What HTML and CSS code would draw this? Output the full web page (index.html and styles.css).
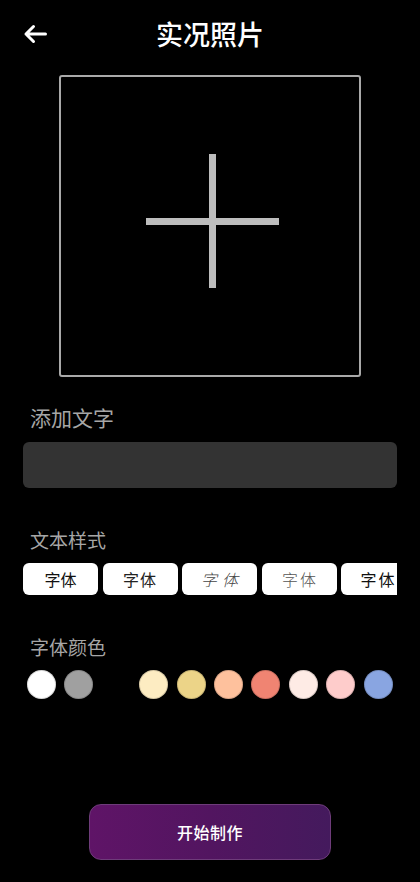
FILE: index.html
```html
<!DOCTYPE html>
<html lang="zh">
<head>
<meta charset="utf-8">
<link rel="stylesheet" href="styles.css">
</head>
<body>
<div class="page">
  <header class="topbar">
    <div class="back">
      <svg width="24" height="20" viewBox="0 0 24 20"><path d="M22.5 10H3M10.5 2.5L3 10l7.5 7.5" fill="none" stroke="#fff" stroke-width="3" stroke-linecap="round" stroke-linejoin="round"/></svg>
    </div>
    <h1 class="title">实况照片</h1>
    <div></div>
  </header>

  <div class="picker">
    <div class="plus"><span class="plus-h"></span><span class="plus-v"></span></div>
  </div>

  <div class="label label-lg">添加文字</div>
  <div class="input"></div>

  <div class="label label-sm">文本样式</div>
  <div class="chips">
    <div class="chip f1">字体</div>
    <div class="chip f2">字体</div>
    <div class="chip f3">字体</div>
    <div class="chip f4">字体</div>
    <div class="chip f5">字体</div>
  </div>

  <div class="label label-sm label-color">字体颜色</div>
  <div class="colors">
    <span class="dot c-white"></span>
    <span class="dot c-gray"></span>
    <span class="dot c-black"></span>
    <span class="dot c-cream"></span>
    <span class="dot c-gold"></span>
    <span class="dot c-peach"></span>
    <span class="dot c-coral"></span>
    <span class="dot c-blush"></span>
    <span class="dot c-pink"></span>
    <span class="dot c-blue"></span>
  </div>

  <button class="start">开始制作</button>
</div>
</body>
</html>
```

FILE: styles.css
```css
* { box-sizing: border-box; }
html, body { margin: 0; padding: 0; background: #000; }
body { font-family: "Noto Sans CJK SC", "Noto Sans", sans-serif; color: #fff; }

.page {
  width: 420px;
  height: 882px;
  display: flex;
  flex-direction: column;
  overflow: hidden;
}

.topbar {
  height: 68px;
  display: grid;
  grid-template-columns: 1fr auto 1fr;
  align-items: center;
}
.back { padding-left: 23px; display: flex; align-items: center; }
.title {
  margin: 0;
  font-size: 27px;
  font-weight: 500;
  line-height: 68px;
}

.picker {
  margin: 7px auto 0;
  width: 302px;
  height: 302px;
  border: 2px solid #a9a9a9;
  border-radius: 3px;
  display: flex;
  align-items: center;
  justify-content: center;
}
.plus { position: relative; width: 133px; height: 134px; margin: 0 0 10px 4px; }
.plus-h { position: absolute; left: 0; right: 0; top: 64px; height: 7px; background: #bdbdbd; }
.plus-v { position: absolute; top: 0; bottom: 0; left: 63px; width: 7px; background: #bdbdbd; }

.label { padding-left: 30px; color: #a6a6a6; }
.label-lg { font-size: 21px; line-height: 28px; margin-top: 26px; }
.label-sm { font-size: 19px; line-height: 26px; margin-top: 39px; }
.label-color { margin-top: 39px; }

.input {
  margin: 11px 23px 0;
  height: 46px;
  background: #333333;
  border-radius: 6px;
}

.chips {
  margin: 10px 23px 0;
  display: flex;
  gap: 4.5px;
  overflow: hidden;
}
.chip {
  flex: 0 0 75px;
  height: 32px;
  background: #fff;
  border-radius: 6px;
  color: #111;
  font-size: 16px;
  line-height: 32px;
  text-align: center;
}
.f2 { font-weight: 400; letter-spacing: 1px; color: #222; }
.f3 { font-weight: 300; color: #444; letter-spacing: 5px; text-indent: 5px; font-style: italic; }
.f4 { font-weight: 300; color: #555; letter-spacing: 2px; text-indent: 2px; }
.f5 { letter-spacing: 2px; }

.colors {
  margin: 10px 27px 0;
  display: flex;
  gap: 8.4px;
}
.dot {
  flex: 0 0 29px;
  width: 29px;
  height: 29px;
  border-radius: 50%;
  box-shadow: inset 0 0 0 1px rgba(0,0,0,0.15);
}
.c-white { background: #ffffff; }
.c-gray { background: #a0a0a0; }
.c-black { background: #000000; }
.c-cream { background: #fdecc2; }
.c-gold { background: #ecd488; }
.c-peach { background: #fec19d; }
.c-coral { background: #f08472; }
.c-blush { background: #feebe5; }
.c-pink { background: #fecccb; }
.c-blue { background: #89a5e1; }

.start {
  margin: auto auto 22px;
  width: 242px;
  height: 56px;
  border-radius: 12px;
  border: 1px solid #6e3c7a;
  background: linear-gradient(90deg, #5f1467 0%, #521560 50%, #441a5d 100%);
  color: #fff;
  font-family: "Noto Sans CJK SC", sans-serif;
  font-size: 16px;
  font-weight: 500;
  letter-spacing: 0.5px;
  padding: 0;
}
```
